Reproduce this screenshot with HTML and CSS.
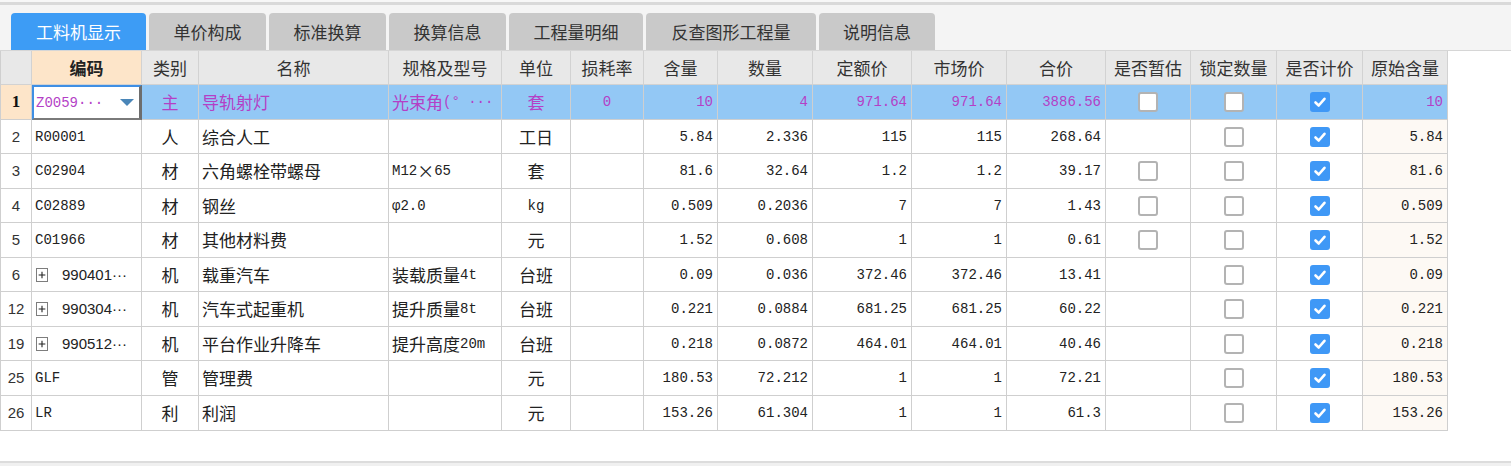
FILE: index.html
```html
<!DOCTYPE html>
<html lang="zh-CN">
<head>
<meta charset="utf-8">
<title>工料机显示</title>
<link rel="stylesheet" href="styles.css">
</head>
<body>
<div class="app">
  <div class="topline"></div>
  <div class="tabbar">
    <div class="tab active">工料机显示</div>
    <div class="tab">单价构成</div>
    <div class="tab">标准换算</div>
    <div class="tab">换算信息</div>
    <div class="tab">工程量明细</div>
    <div class="tab">反查图形工程量</div>
    <div class="tab">说明信息</div>
  </div>
  <div class="gridarea">
    <div class="grid">
      <div class="row head">
        <div class="cell hc"></div>
        <div class="cell hc code-h">编码</div>
        <div class="cell hc">类别</div>
        <div class="cell hc">名称</div>
        <div class="cell hc">规格及型号</div>
        <div class="cell hc">单位</div>
        <div class="cell hc">损耗率</div>
        <div class="cell hc">含量</div>
        <div class="cell hc">数量</div>
        <div class="cell hc">定额价</div>
        <div class="cell hc">市场价</div>
        <div class="cell hc">合价</div>
        <div class="cell hc">是否暂估</div>
        <div class="cell hc">锁定数量</div>
        <div class="cell hc">是否计价</div>
        <div class="cell hc">原始含量</div>
      </div>

      <div class="row sel h35">
        <div class="cell rn rn-sel">1</div>
        <div class="cell editor"><span class="m">Z0059···</span><span class="dd"></span></div>
        <div class="cell c">主</div>
        <div class="cell l">导轨射灯</div>
        <div class="cell l">光束角<span class="m">(°&nbsp;···</span></div>
        <div class="cell c">套</div>
        <div class="cell c m">0</div>
        <div class="cell r">10</div>
        <div class="cell r">4</div>
        <div class="cell r">971.64</div>
        <div class="cell r">971.64</div>
        <div class="cell r">3886.56</div>
        <div class="cell c"><span class="cb fill"></span></div>
        <div class="cell c"><span class="cb fill"></span></div>
        <div class="cell c"><span class="cb on"><svg viewBox="0 0 20 20"><path d="M5.5 10.5 L8.7 13.5 L14.5 6.8"/></svg></span></div>
        <div class="cell r orig">10</div>
      </div>

      <div class="row h34">
        <div class="cell rn">2</div>
        <div class="cell l m">R00001</div>
        <div class="cell c">人</div>
        <div class="cell l">综合人工</div>
        <div class="cell l"></div>
        <div class="cell c">工日</div>
        <div class="cell c"></div>
        <div class="cell r">5.84</div>
        <div class="cell r">2.336</div>
        <div class="cell r">115</div>
        <div class="cell r">115</div>
        <div class="cell r">268.64</div>
        <div class="cell c"></div>
        <div class="cell c"><span class="cb"></span></div>
        <div class="cell c"><span class="cb on"><svg viewBox="0 0 20 20"><path d="M5.5 10.5 L8.7 13.5 L14.5 6.8"/></svg></span></div>
        <div class="cell r orig">5.84</div>
      </div>

      <div class="row h35">
        <div class="cell rn">3</div>
        <div class="cell l m">C02904</div>
        <div class="cell c">材</div>
        <div class="cell l">六角螺栓带螺母</div>
        <div class="cell l"><span class="m">M12</span>×<span class="m">65</span></div>
        <div class="cell c">套</div>
        <div class="cell c"></div>
        <div class="cell r">81.6</div>
        <div class="cell r">32.64</div>
        <div class="cell r">1.2</div>
        <div class="cell r">1.2</div>
        <div class="cell r">39.17</div>
        <div class="cell c"><span class="cb"></span></div>
        <div class="cell c"><span class="cb"></span></div>
        <div class="cell c"><span class="cb on"><svg viewBox="0 0 20 20"><path d="M5.5 10.5 L8.7 13.5 L14.5 6.8"/></svg></span></div>
        <div class="cell r orig">81.6</div>
      </div>

      <div class="row h34">
        <div class="cell rn">4</div>
        <div class="cell l m">C02889</div>
        <div class="cell c">材</div>
        <div class="cell l">钢丝</div>
        <div class="cell l m">φ2.0</div>
        <div class="cell c m">kg</div>
        <div class="cell c"></div>
        <div class="cell r">0.509</div>
        <div class="cell r">0.2036</div>
        <div class="cell r">7</div>
        <div class="cell r">7</div>
        <div class="cell r">1.43</div>
        <div class="cell c"><span class="cb"></span></div>
        <div class="cell c"><span class="cb"></span></div>
        <div class="cell c"><span class="cb on"><svg viewBox="0 0 20 20"><path d="M5.5 10.5 L8.7 13.5 L14.5 6.8"/></svg></span></div>
        <div class="cell r orig">0.509</div>
      </div>

      <div class="row h35">
        <div class="cell rn">5</div>
        <div class="cell l m">C01966</div>
        <div class="cell c">材</div>
        <div class="cell l">其他材料费</div>
        <div class="cell l"></div>
        <div class="cell c">元</div>
        <div class="cell c"></div>
        <div class="cell r">1.52</div>
        <div class="cell r">0.608</div>
        <div class="cell r">1</div>
        <div class="cell r">1</div>
        <div class="cell r">0.61</div>
        <div class="cell c"><span class="cb"></span></div>
        <div class="cell c"><span class="cb"></span></div>
        <div class="cell c"><span class="cb on"><svg viewBox="0 0 20 20"><path d="M5.5 10.5 L8.7 13.5 L14.5 6.8"/></svg></span></div>
        <div class="cell r orig">1.52</div>
      </div>

      <div class="row h34">
        <div class="cell rn">6</div>
        <div class="cell l tree"><span class="plus"><svg viewBox="0 0 12 13"><path d="M6 2.5 V10.5 M2 6.5 H10"/></svg></span><span class="sn">990401···</span></div>
        <div class="cell c">机</div>
        <div class="cell l">载重汽车</div>
        <div class="cell l">装载质量<span class="m">4t</span></div>
        <div class="cell c">台班</div>
        <div class="cell c"></div>
        <div class="cell r">0.09</div>
        <div class="cell r">0.036</div>
        <div class="cell r">372.46</div>
        <div class="cell r">372.46</div>
        <div class="cell r">13.41</div>
        <div class="cell c"></div>
        <div class="cell c"><span class="cb"></span></div>
        <div class="cell c"><span class="cb on"><svg viewBox="0 0 20 20"><path d="M5.5 10.5 L8.7 13.5 L14.5 6.8"/></svg></span></div>
        <div class="cell r orig">0.09</div>
      </div>

      <div class="row h35">
        <div class="cell rn">12</div>
        <div class="cell l tree"><span class="plus"><svg viewBox="0 0 12 13"><path d="M6 2.5 V10.5 M2 6.5 H10"/></svg></span><span class="sn">990304···</span></div>
        <div class="cell c">机</div>
        <div class="cell l">汽车式起重机</div>
        <div class="cell l">提升质量<span class="m">8t</span></div>
        <div class="cell c">台班</div>
        <div class="cell c"></div>
        <div class="cell r">0.221</div>
        <div class="cell r">0.0884</div>
        <div class="cell r">681.25</div>
        <div class="cell r">681.25</div>
        <div class="cell r">60.22</div>
        <div class="cell c"></div>
        <div class="cell c"><span class="cb"></span></div>
        <div class="cell c"><span class="cb on"><svg viewBox="0 0 20 20"><path d="M5.5 10.5 L8.7 13.5 L14.5 6.8"/></svg></span></div>
        <div class="cell r orig">0.221</div>
      </div>

      <div class="row h34">
        <div class="cell rn">19</div>
        <div class="cell l tree"><span class="plus"><svg viewBox="0 0 12 13"><path d="M6 2.5 V10.5 M2 6.5 H10"/></svg></span><span class="sn">990512···</span></div>
        <div class="cell c">机</div>
        <div class="cell l">平台作业升降车</div>
        <div class="cell l">提升高度<span class="m">20m</span></div>
        <div class="cell c">台班</div>
        <div class="cell c"></div>
        <div class="cell r">0.218</div>
        <div class="cell r">0.0872</div>
        <div class="cell r">464.01</div>
        <div class="cell r">464.01</div>
        <div class="cell r">40.46</div>
        <div class="cell c"></div>
        <div class="cell c"><span class="cb"></span></div>
        <div class="cell c"><span class="cb on"><svg viewBox="0 0 20 20"><path d="M5.5 10.5 L8.7 13.5 L14.5 6.8"/></svg></span></div>
        <div class="cell r orig">0.218</div>
      </div>

      <div class="row h35">
        <div class="cell rn">25</div>
        <div class="cell l m">GLF</div>
        <div class="cell c">管</div>
        <div class="cell l">管理费</div>
        <div class="cell l"></div>
        <div class="cell c">元</div>
        <div class="cell c"></div>
        <div class="cell r">180.53</div>
        <div class="cell r">72.212</div>
        <div class="cell r">1</div>
        <div class="cell r">1</div>
        <div class="cell r">72.21</div>
        <div class="cell c"></div>
        <div class="cell c"><span class="cb"></span></div>
        <div class="cell c"><span class="cb on"><svg viewBox="0 0 20 20"><path d="M5.5 10.5 L8.7 13.5 L14.5 6.8"/></svg></span></div>
        <div class="cell r orig">180.53</div>
      </div>

      <div class="row h35">
        <div class="cell rn">26</div>
        <div class="cell l m">LR</div>
        <div class="cell c">利</div>
        <div class="cell l">利润</div>
        <div class="cell l"></div>
        <div class="cell c">元</div>
        <div class="cell c"></div>
        <div class="cell r">153.26</div>
        <div class="cell r">61.304</div>
        <div class="cell r">1</div>
        <div class="cell r">1</div>
        <div class="cell r">61.3</div>
        <div class="cell c"></div>
        <div class="cell c"><span class="cb"></span></div>
        <div class="cell c"><span class="cb on"><svg viewBox="0 0 20 20"><path d="M5.5 10.5 L8.7 13.5 L14.5 6.8"/></svg></span></div>
        <div class="cell r orig">153.26</div>
      </div>
    </div>
  </div>
  <div class="statusbar"></div>
</div>
</body>
</html>
```

FILE: styles.css
```css
* { box-sizing: border-box; }
html, body { margin: 0; padding: 0; }
body {
  width: 1511px;
  height: 466px;
  overflow: hidden;
  background: #ffffff;
  font-family: "Noto Sans CJK SC", "Noto Sans", sans-serif;
  color: #222;
}
.app {
  display: flex;
  flex-direction: column;
  height: 466px;
}
.topline {
  height: 5px;
  background: #f7f7f7;
  border-bottom: 3px solid #d9d9d9;
  flex: none;
}
.tabbar {
  height: 46px;
  flex: none;
  background: #f4f4f4;
  border-bottom: 1px solid #d6d6d6;
  display: flex;
  align-items: flex-end;
  gap: 3px;
  padding-left: 11px;
}
.tab {
  height: 37px;
  background: #c9c9c9;
  color: #333;
  font-size: 17px;
  line-height: 37px;
  text-align: center;
  border-radius: 4px 4px 0 0;
}
.tab:nth-child(1) { width: 135px; }
.tab:nth-child(2) { width: 117px; }
.tab:nth-child(3) { width: 117px; }
.tab:nth-child(4) { width: 117px; }
.tab:nth-child(5) { width: 134px; }
.tab:nth-child(6) { width: 170px; }
.tab:nth-child(7) { width: 116px; }
.tab.active {
  background: #3d9cf5;
  color: #fff;
}
.gridarea {
  flex: 1;
  background: #fff;
}
.grid {
  width: 1448px;
  border-left: 1px solid #cfcfcf;
}
.row {
  display: grid;
  grid-template-columns: 31px 110px 57px 190px 113px 69px 73px 74px 95px 99px 95px 99px 85px 86px 86px 85px;
  height: 34px;
}
.row.head { height: 34px; }
.row.h34 { height: 34px; }
.row.h35 { height: 35px; }
.cell {
  border-right: 1px solid #cfcfcf;
  border-bottom: 1px solid #cfcfcf;
  display: flex;
  align-items: center;
  white-space: nowrap;
  overflow: hidden;
  font-size: 17px;
  line-height: 20px;
  color: #222;
}
.hc {
  background: #e8e8e8;
  justify-content: center;
  color: #333;
  border-color: #d2d2d2;
}
.code-h {
  background: #fde5c9;
  font-weight: bold;
  color: #222;
}
.c { justify-content: center; }
.l { justify-content: flex-start; padding-left: 3px; }
.r {
  justify-content: flex-end;
  padding-right: 4px;
  font-family: "Liberation Mono", "DejaVu Sans Mono", monospace;
  font-size: 14px;
}
.m {
  font-family: "Liberation Mono", "DejaVu Sans Mono", monospace;
  font-size: 14px;
}
.rn {
  justify-content: center;
  font-family: "Liberation Sans", "DejaVu Sans", sans-serif;
  font-size: 15px;
  color: #333;
}
.rn-sel {
  background: #fde5c9;
  font-family: "Liberation Serif", "DejaVu Serif", serif;
  font-weight: bold;
  font-size: 17px;
  color: #111;
}
.orig { background: #fdf9f4; }
.row.sel .cell { background: #93c8f5; color: #b43fc6; }
.row.sel .cell.rn-sel { background: #fde5c9; color: #111; }
.row.sel .cell.editor {
  background: #fff;
  border-top: 2px solid #3f8fe4;
  border-left: 2px solid #3f8fe4;
  border-right: 3px solid #6d6d6d;
  border-bottom: 2px solid #7a7a7a;
  padding-left: 2px;
  justify-content: space-between;
  padding-right: 5px;
}
.dd {
  width: 0;
  height: 0;
  border-left: 7px solid transparent;
  border-right: 7px solid transparent;
  border-top: 7px solid #4a86b8;
}
.tree { padding-left: 4px; }
.plus {
  width: 12px;
  height: 14px;
  border: 1px solid #7d7d7d;
  display: inline-flex;
  align-items: center;
  justify-content: center;
  margin-right: 14px;
  background: #fff;
}
.plus svg { width: 10px; height: 12px; }
.plus path { stroke: #222; stroke-width: 1.3; fill: none; }
.sn {
  font-family: "Liberation Sans", "DejaVu Sans", sans-serif;
  font-size: 15px;
  color: #222;
}
.cb {
  width: 20px;
  height: 20px;
  border: 2px solid #b3b3b3;
  border-radius: 3px;
  background: #fff;
  display: inline-block;
}
.cb.on {
  background: #3f98f6;
  border-color: #3f98f6;
  position: relative;
}
.cb.on svg {
  position: absolute;
  left: -2px;
  top: -2px;
  width: 20px;
  height: 20px;
}
.cb.on path {
  fill: none;
  stroke: #fff;
  stroke-width: 2.6;
  stroke-linecap: round;
  stroke-linejoin: round;
}
.statusbar {
  height: 5px;
  flex: none;
  background: #f0f0f0;
  border-top: 2px solid #dcdcdc;
}
```
